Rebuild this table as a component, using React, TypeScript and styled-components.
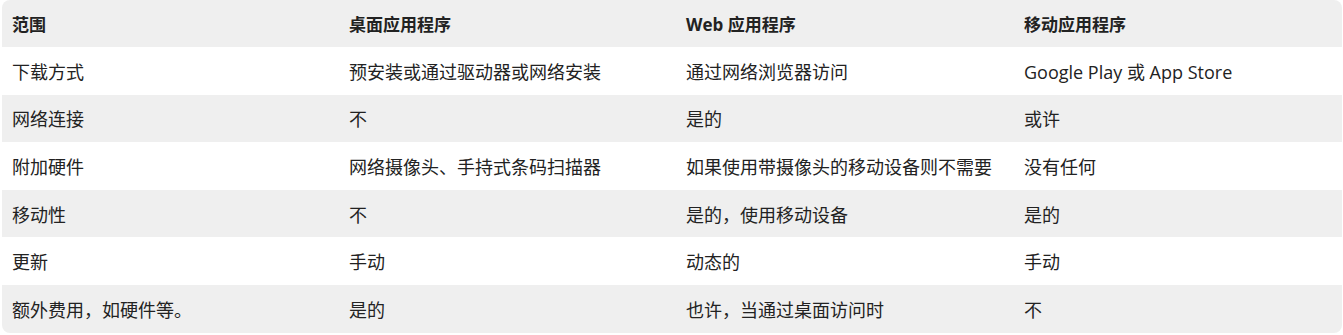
import React from "react";
import styled, { createGlobalStyle } from "styled-components";

const GlobalStyle = createGlobalStyle`
  html, body {
    margin: 0;
    padding: 0;
    background: #ffffff;
  }
  body {
    font-family: "Open Sans", "Noto Sans CJK SC", sans-serif;
    color: #222222;
  }
`;

const StyledWrapper = styled.div`
  margin: 0 1px 0 2px;
  border-radius: 8px;
  overflow: hidden;
`;

const StyledTable = styled.table`
  width: 100%;
  border-collapse: collapse;
  table-layout: fixed;
  font-size: 18px;
`;

const StyledRow = styled.tr<{ $shaded: boolean }>`
  background: ${({ $shaded }) => ($shaded ? "#efefef" : "#ffffff")};
`;

const StyledHeadCell = styled.th`
  height: 47px;
  padding: 0 10px;
  text-align: left;
  font-size: 17px;
  font-weight: 700;
  vertical-align: middle;
  white-space: nowrap;
`;

const StyledCell = styled.td`
  height: 47.6px;
  padding: 0 10px;
  font-weight: 400;
  vertical-align: middle;
  white-space: nowrap;
`;

const headers = ["范围", "桌面应用程序", "Web 应用程序", "移动应用程序"];

const rows: string[][] = [
  ["下载方式", "预安装或通过驱动器或网络安装", "通过网络浏览器访问", "Google Play 或 App Store"],
  ["网络连接", "不", "是的", "或许"],
  ["附加硬件", "网络摄像头、手持式条码扫描器", "如果使用带摄像头的移动设备则不需要", "没有任何"],
  ["移动性", "不", "是的，使用移动设备", "是的"],
  ["更新", "手动", "动态的", "手动"],
  ["额外费用，如硬件等。", "是的", "也许，当通过桌面访问时", "不"],
];

const colWidths = [337, 337, 338, 328];

const App = () => {
  return (
    <>
      <GlobalStyle />
      <StyledWrapper>
        <StyledTable>
          <colgroup>
            {colWidths.map((w, i) => (
              <col key={i} style={{ width: w }} />
            ))}
          </colgroup>
          <thead>
            <StyledRow $shaded>
              {headers.map((h) => (
                <StyledHeadCell key={h}>{h}</StyledHeadCell>
              ))}
            </StyledRow>
          </thead>
          <tbody>
            {rows.map((row, i) => (
              <StyledRow key={i} $shaded={i % 2 === 1}>
                {row.map((cell, j) => (
                  <StyledCell key={j}>{cell}</StyledCell>
                ))}
              </StyledRow>
            ))}
          </tbody>
        </StyledTable>
      </StyledWrapper>
    </>
  );
};

export default App;
